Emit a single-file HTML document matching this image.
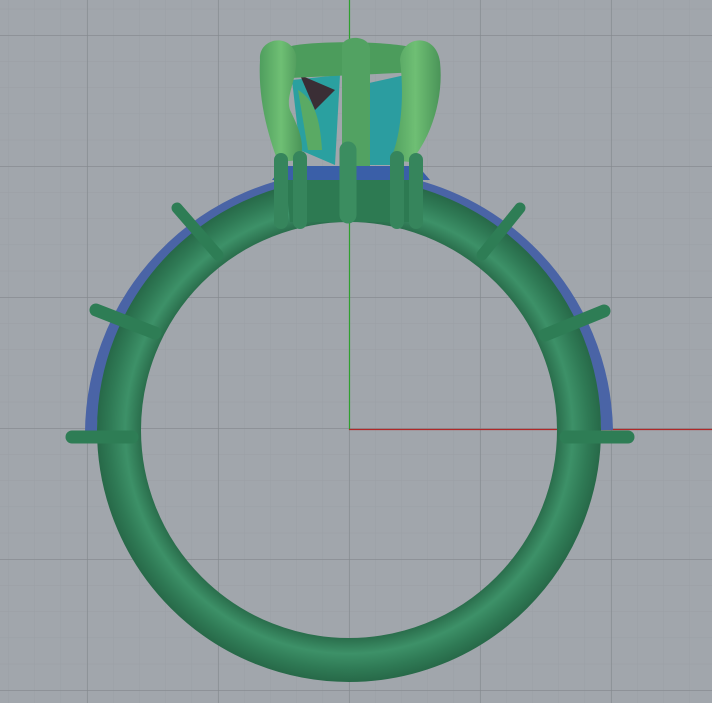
<!DOCTYPE html>
<html><head><style>
html,body{margin:0;padding:0;background:#a1a6ac;}
svg{display:block}
</style></head><body>
<svg width="712" height="703" viewBox="0 0 712 703" xmlns="http://www.w3.org/2000/svg">
<defs>
<pattern id="minor" width="26.2" height="26.2" patternUnits="userSpaceOnUse" x="8.2" y="8.8">
<path d="M0 0H26.2M0 0V26.2" stroke="#9a9fa5" stroke-width="1" fill="none"/>
</pattern>
<pattern id="major" width="131" height="131" patternUnits="userSpaceOnUse" x="87" y="35">
<path d="M0 0H131M0 0V131" stroke="#82878c" stroke-width="1.2" fill="none"/>
</pattern>
<radialGradient id="band" cx="349" cy="430" r="260" gradientUnits="userSpaceOnUse">
<stop offset="0.8" stop-color="#2a6e4c"/>
<stop offset="0.86" stop-color="#3d9168"/>
<stop offset="0.92" stop-color="#2f7a55"/>
<stop offset="1" stop-color="#225e40"/>
</radialGradient>
<linearGradient id="head" x1="0" y1="0" x2="1" y2="0">
<stop offset="0" stop-color="#4f9e5e"/><stop offset="0.5" stop-color="#6fbf74"/><stop offset="1" stop-color="#4a9458"/>
</linearGradient>
</defs>
<rect width="712" height="703" fill="#a1a6ac"/>
<rect width="712" height="703" fill="url(#minor)"/>
<rect width="712" height="703" fill="url(#major)"/>
<line x1="349.5" y1="0" x2="349.5" y2="430" stroke="#2fa02f" stroke-width="1.2"/>
<line x1="349" y1="429.5" x2="712" y2="429.5" stroke="#b02828" stroke-width="1.2"/>

<!-- head -->
<g>
<path d="M292 80 L340 75 L335 165 L300 150Z" fill="#2aa0a0"/>
<path d="M300 75 L335 90 L315 110Z" fill="#3a2e35"/>
<path d="M360 85 L405 75 L400 165 L365 165Z" fill="#2b9da0"/>
<path d="M285 48 C300 40 400 40 420 50 L420 72 L290 78Z" fill="#4c9c5c"/>
<path d="M260 60 C258 38 290 32 296 55 C298 80 285 95 290 110 C300 130 305 145 300 160 L278 162 C266 130 258 95 260 60Z" fill="url(#head)"/>
<path d="M400 60 C402 35 436 32 440 62 C444 100 430 140 410 162 L390 160 C400 140 405 100 400 60Z" fill="url(#head)"/>
<path d="M342 45 C345 35 368 35 370 48 L370 210 L342 212Z" fill="#52a262"/>
<path d="M298 90 C315 100 320 120 322 150 L308 150Z" fill="#5aaa64"/>
</g>

<!-- blue stones outer arc -->
<path d="M91 440 A258 258 0 0 1 607 430" fill="none" stroke="#4a64a6" stroke-width="12"/>
<!-- band -->
<circle cx="349" cy="430" r="230" fill="none" stroke="url(#band)" stroke-width="44"/>
<!-- bezel under head -->
<path d="M285 172 L415 172 L412 222 L290 222Z" fill="#2d7a52"/>
<path d="M283 166 L418 166 L430 180 L272 180Z" fill="#3a5fa8"/>

<!-- prongs -->
<g stroke-linecap="round" fill="none">
<line x1="72" y1="437" x2="132" y2="437" stroke="#2e7d55" stroke-width="13"/>
<line x1="96" y1="310" x2="155" y2="333" stroke="#2e7d55" stroke-width="13"/>
<line x1="177" y1="208" x2="218" y2="255" stroke="#2e7d55" stroke-width="11"/>
<line x1="520" y1="208" x2="482" y2="255" stroke="#2e7d55" stroke-width="11"/>
<line x1="604" y1="311" x2="545" y2="335" stroke="#2e7d55" stroke-width="13"/>
<line x1="628" y1="437" x2="566" y2="437" stroke="#2e7d55" stroke-width="13"/>
<line x1="281" y1="160" x2="281" y2="222" stroke="#36855c" stroke-width="14"/>
<line x1="300" y1="158" x2="300" y2="222" stroke="#36855c" stroke-width="14"/>
<line x1="348" y1="150" x2="348" y2="215" stroke="#3b8d60" stroke-width="17"/>
<line x1="397" y1="158" x2="397" y2="222" stroke="#36855c" stroke-width="14"/>
<line x1="416" y1="160" x2="416" y2="222" stroke="#36855c" stroke-width="14"/>
</g>
</svg>
</body></html>
